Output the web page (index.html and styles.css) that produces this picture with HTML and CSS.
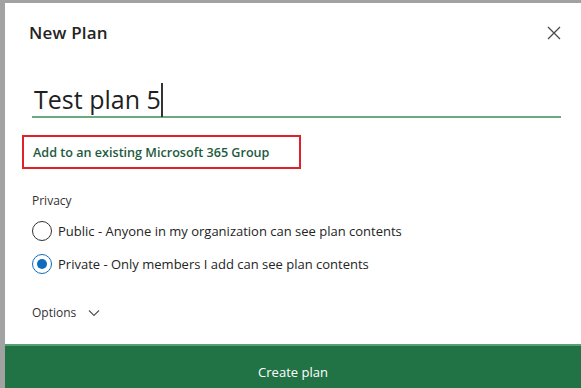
FILE: index.html
```html
<!DOCTYPE html>
<html lang="en">

<head>
    <meta charset="UTF-8">
    <meta name="viewport" content="width=device-width, initial-scale=1.0">
    <title>New Plan</title>
    <link rel="stylesheet" href="styles.css">
</head>

<body>
    <section class="dialog">
        <div class="head">
            <h1 class="title">New Plan</h1>
            <button class="close" aria-label="Close">
                <svg width="14" height="14" viewBox="0 0 14 14">
                    <path d="M1 1 L13 13 M13 1 L1 13" stroke="#4a4a4a" stroke-width="1.3" fill="none" />
                </svg>
            </button>
        </div>

        <div class="content">
            <div class="name">
                <span class="name-text">Test plan 5</span><span class="caret"></span>
            </div>

            <div class="group-link">Add to an existing Microsoft 365 Group</div>

            <div class="label">Privacy</div>

            <label class="radio">
                <span class="dot"></span>
                Public - Anyone in my organization can see plan contents
            </label>
            <label class="radio on">
                <span class="dot"></span>
                Private - Only members I add can see plan contents
            </label>

            <div class="options">
                Options
                <svg width="12" height="8" viewBox="0 0 12 8">
                    <path d="M1 1.5 L6 6.5 L11 1.5" stroke="#555" stroke-width="1.2" fill="none" />
                </svg>
            </div>
        </div>

        <button class="create">Create plan</button>
    </section>
</body>

</html>
```

FILE: styles.css
```css
* {
    margin: 0;
    padding: 0;
    box-sizing: border-box;
}

body {
    background-color: #a2a2a2;
    font-family: 'Open Sans', 'Noto Sans', sans-serif;
    color: #242424;
    overflow: hidden;
}

.dialog {
    margin: 3px 0 0 5px;
    height: 385px;
    background-color: white;
    display: flex;
    flex-direction: column;
}

.head {
    display: flex;
    justify-content: space-between;
    align-items: center;
    padding: 18px 20px 0 24px;
}

.title {
    font-size: 17px;
    font-weight: 600;
    line-height: 24px;
    letter-spacing: 0.2px;
}

.close {
    background: none;
    border: none;
    width: 14px;
    height: 14px;
    display: flex;
}

.content {
    flex: 1;
    padding: 0 20px 0 27px;
}

.name {
    margin-top: 37px;
    border-bottom: 2px solid #6aa983;
    height: 36px;
    display: flex;
    align-items: flex-end;
    padding-left: 2px;
}

.name-text {
    font-size: 25px;
    line-height: 34px;
    color: #1f1f1f;
}

.caret {
    width: 2px;
    height: 34px;
    background-color: #333;
    margin-bottom: -1px;
}

.group-link {
    margin: 17px 0 0 -10px;
    width: 279px;
    height: 34px;
    border: 2px solid #e0202a;
    font-size: 12.6px;
    font-weight: 600;
    color: #1e5b3d;
    padding-left: 9px;
    line-height: 31px;
}

.label {
    margin-top: 23px;
    font-size: 12px;
    color: #333;
}

.radio {
    display: flex;
    align-items: center;
    gap: 6px;
    font-size: 13px;
    margin-top: 11px;
    height: 22px;
}

.radio + .radio {
    margin-top: 11px;
}

.dot {
    width: 20px;
    height: 20px;
    border: 1.5px solid #333;
    border-radius: 50%;
    display: flex;
    justify-content: center;
    align-items: center;
}

.on .dot {
    border-color: #0f6cbd;
}

.on .dot::after {
    content: "";
    width: 10px;
    height: 10px;
    border-radius: 50%;
    background-color: #0f6cbd;
}

.options {
    margin-top: 29px;
    font-size: 12px;
    display: flex;
    align-items: center;
    gap: 12px;
    color: #333;
}

.create {
    height: 44px;
    border: none;
    border-top: 2px solid #5a9e74;
    padding-top: 10px;
    background-color: #217346;
    color: white;
    font-family: 'Open Sans', 'Noto Sans', sans-serif;
    font-size: 13px;
}
```
